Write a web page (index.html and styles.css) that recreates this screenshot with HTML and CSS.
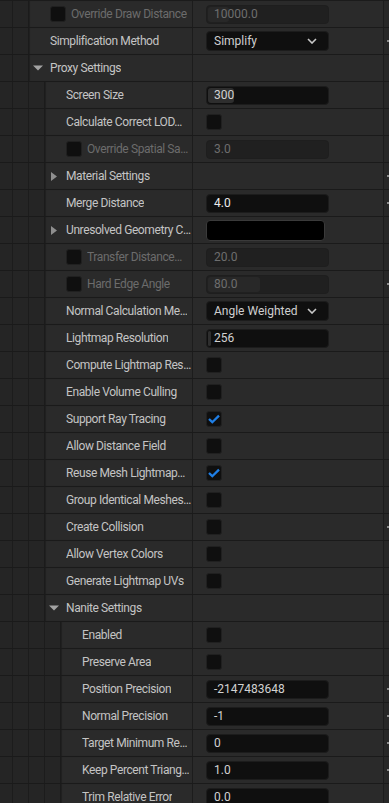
FILE: index.html
```html
<!DOCTYPE html>
<html lang="en">
<head>
    <meta charset="UTF-8">
    <meta name="viewport" content="width=device-width, initial-scale=1.0">
    <title>Proxy Settings</title>
    <link rel="stylesheet" href="styles.css">
</head>
<body>
    <div class="panel">
        <div class="row">
            <span class="ind"></span><span class="ind"></span>
            <div class="name"><span class="check"></span><span class="label dim">Override Draw Distance</span></div>
            <div class="value"><div class="field dim"><span class="fill" style="width:21px"></span><span class="txt">10000.0</span></div></div>
            <div class="tail"></div>
        </div>
        <div class="row">
            <span class="ind"></span><span class="ind"></span>
            <div class="name"><span class="label">Simplification Method</span></div>
            <div class="value"><div class="combo"><span>Simplify</span><svg width="10" height="6" viewBox="0 0 10 6"><polyline points="1,1 5,5 9,1" fill="none" stroke="#c8c8c8" stroke-width="1.6"/></svg></div></div>
            <div class="tail"><span class="mark"></span></div>
        </div>
        <div class="row">
            <span class="ind"></span><span class="ind"></span>
            <div class="name cat"><span class="arrow"><svg width="10" height="6" viewBox="0 0 10 6"><polygon points="0,0.5 10,0.5 5,5.5" fill="#a3a3a3"/></svg></span><span class="label">Proxy Settings</span></div>
            <div class="value"></div>
            <div class="tail"></div>
        </div>
        <div class="row">
            <span class="ind"></span><span class="ind"></span><span class="ind"></span>
            <div class="name"><span class="label">Screen Size</span></div>
            <div class="value"><div class="field"><span class="fill" style="width:26px"></span><span class="txt">300</span></div></div>
            <div class="tail"></div>
        </div>
        <div class="row">
            <span class="ind"></span><span class="ind"></span><span class="ind"></span>
            <div class="name"><span class="label">Calculate Correct LOD…</span></div>
            <div class="value"><span class="check"></span></div>
            <div class="tail"></div>
        </div>
        <div class="row">
            <span class="ind"></span><span class="ind"></span><span class="ind"></span>
            <div class="name"><span class="check"></span><span class="label dim">Override Spatial Sa…</span></div>
            <div class="value"><div class="field dim"><span class="txt">3.0</span></div></div>
            <div class="tail"></div>
        </div>
        <div class="row">
            <span class="ind"></span><span class="ind"></span><span class="ind"></span>
            <div class="name cat"><span class="arrow"><svg width="6" height="9" viewBox="0 0 6 9"><polygon points="0,0 6,4.5 0,9" fill="#8e8e8e"/></svg></span><span class="label">Material Settings</span></div>
            <div class="value"></div>
            <div class="tail"><span class="mark"></span></div>
        </div>
        <div class="row">
            <span class="ind"></span><span class="ind"></span><span class="ind"></span>
            <div class="name"><span class="label">Merge Distance</span></div>
            <div class="value"><div class="field bright"><span class="txt">4.0</span></div></div>
            <div class="tail"><span class="mark"></span></div>
        </div>
        <div class="row">
            <span class="ind"></span><span class="ind"></span><span class="ind"></span>
            <div class="name cat"><span class="arrow"><svg width="6" height="9" viewBox="0 0 6 9"><polygon points="0,0 6,4.5 0,9" fill="#8e8e8e"/></svg></span><span class="label">Unresolved Geometry C…</span></div>
            <div class="value"><div class="swatch"></div></div>
            <div class="tail"></div>
        </div>
        <div class="row">
            <span class="ind"></span><span class="ind"></span><span class="ind"></span>
            <div class="name"><span class="check"></span><span class="label dim">Transfer Distance…</span></div>
            <div class="value"><div class="field dim"><span class="txt">20.0</span></div></div>
            <div class="tail"></div>
        </div>
        <div class="row">
            <span class="ind"></span><span class="ind"></span><span class="ind"></span>
            <div class="name"><span class="check"></span><span class="label dim">Hard Edge Angle</span></div>
            <div class="value"><div class="field dim"><span class="fill" style="width:52px"></span><span class="txt">80.0</span></div></div>
            <div class="tail"><span class="mark"></span></div>
        </div>
        <div class="row">
            <span class="ind"></span><span class="ind"></span><span class="ind"></span>
            <div class="name"><span class="label">Normal Calculation Me…</span></div>
            <div class="value"><div class="combo"><span>Angle Weighted</span><svg width="10" height="6" viewBox="0 0 10 6"><polyline points="1,1 5,5 9,1" fill="none" stroke="#c8c8c8" stroke-width="1.6"/></svg></div></div>
            <div class="tail"></div>
        </div>
        <div class="row">
            <span class="ind"></span><span class="ind"></span><span class="ind"></span>
            <div class="name"><span class="label">Lightmap Resolution</span></div>
            <div class="value"><div class="field"><span class="fill" style="width:3px"></span><span class="txt">256</span></div></div>
            <div class="tail"></div>
        </div>
        <div class="row">
            <span class="ind"></span><span class="ind"></span><span class="ind"></span>
            <div class="name"><span class="label">Compute Lightmap Res…</span></div>
            <div class="value"><span class="check"></span></div>
            <div class="tail"></div>
        </div>
        <div class="row">
            <span class="ind"></span><span class="ind"></span><span class="ind"></span>
            <div class="name"><span class="label">Enable Volume Culling</span></div>
            <div class="value"><span class="check"></span></div>
            <div class="tail"></div>
        </div>
        <div class="row">
            <span class="ind"></span><span class="ind"></span><span class="ind"></span>
            <div class="name"><span class="label">Support Ray Tracing</span></div>
            <div class="value"><span class="check"><svg width="16" height="16" viewBox="0 0 16 16"><polyline points="3,8 6.3,11.2 13,4.6" fill="none" stroke="#1f7fe6" stroke-width="2.3"/></svg></span></div>
            <div class="tail"></div>
        </div>
        <div class="row">
            <span class="ind"></span><span class="ind"></span><span class="ind"></span>
            <div class="name"><span class="label">Allow Distance Field</span></div>
            <div class="value"><span class="check"></span></div>
            <div class="tail"></div>
        </div>
        <div class="row">
            <span class="ind"></span><span class="ind"></span><span class="ind"></span>
            <div class="name"><span class="label">Reuse Mesh Lightmap…</span></div>
            <div class="value"><span class="check"><svg width="16" height="16" viewBox="0 0 16 16"><polyline points="3,8 6.3,11.2 13,4.6" fill="none" stroke="#1f7fe6" stroke-width="2.3"/></svg></span></div>
            <div class="tail"></div>
        </div>
        <div class="row">
            <span class="ind"></span><span class="ind"></span><span class="ind"></span>
            <div class="name"><span class="label">Group Identical Meshes…</span></div>
            <div class="value"><span class="check"></span></div>
            <div class="tail"></div>
        </div>
        <div class="row">
            <span class="ind"></span><span class="ind"></span><span class="ind"></span>
            <div class="name"><span class="label">Create Collision</span></div>
            <div class="value"><span class="check"></span></div>
            <div class="tail"><span class="mark"></span></div>
        </div>
        <div class="row">
            <span class="ind"></span><span class="ind"></span><span class="ind"></span>
            <div class="name"><span class="label">Allow Vertex Colors</span></div>
            <div class="value"><span class="check"></span></div>
            <div class="tail"></div>
        </div>
        <div class="row">
            <span class="ind"></span><span class="ind"></span><span class="ind"></span>
            <div class="name"><span class="label">Generate Lightmap UVs</span></div>
            <div class="value"><span class="check"></span></div>
            <div class="tail"></div>
        </div>
        <div class="row">
            <span class="ind"></span><span class="ind"></span><span class="ind"></span>
            <div class="name cat"><span class="arrow"><svg width="10" height="6" viewBox="0 0 10 6"><polygon points="0,0.5 10,0.5 5,5.5" fill="#a3a3a3"/></svg></span><span class="label">Nanite Settings</span></div>
            <div class="value"></div>
            <div class="tail"></div>
        </div>
        <div class="row">
            <span class="ind"></span><span class="ind"></span><span class="ind"></span><span class="ind"></span>
            <div class="name"><span class="label">Enabled</span></div>
            <div class="value"><span class="check"></span></div>
            <div class="tail"></div>
        </div>
        <div class="row">
            <span class="ind"></span><span class="ind"></span><span class="ind"></span><span class="ind"></span>
            <div class="name"><span class="label">Preserve Area</span></div>
            <div class="value"><span class="check"></span></div>
            <div class="tail"></div>
        </div>
        <div class="row">
            <span class="ind"></span><span class="ind"></span><span class="ind"></span><span class="ind"></span>
            <div class="name"><span class="label">Position Precision</span></div>
            <div class="value"><div class="field"><span class="txt">-2147483648</span></div></div>
            <div class="tail"><span class="mark"></span></div>
        </div>
        <div class="row">
            <span class="ind"></span><span class="ind"></span><span class="ind"></span><span class="ind"></span>
            <div class="name"><span class="label">Normal Precision</span></div>
            <div class="value"><div class="field"><span class="txt">-1</span></div></div>
            <div class="tail"><span class="mark"></span></div>
        </div>
        <div class="row">
            <span class="ind"></span><span class="ind"></span><span class="ind"></span><span class="ind"></span>
            <div class="name"><span class="label">Target Minimum Re…</span></div>
            <div class="value"><div class="field"><span class="txt">0</span></div></div>
            <div class="tail"><span class="mark"></span></div>
        </div>
        <div class="row">
            <span class="ind"></span><span class="ind"></span><span class="ind"></span><span class="ind"></span>
            <div class="name"><span class="label">Keep Percent Triang…</span></div>
            <div class="value"><div class="field"><span class="txt">1.0</span></div></div>
            <div class="tail"><span class="mark"></span></div>
        </div>
        <div class="row">
            <span class="ind"></span><span class="ind"></span><span class="ind"></span><span class="ind"></span>
            <div class="name"><span class="label">Trim Relative Error</span></div>
            <div class="value"><div class="field"><span class="txt">0.0</span></div></div>
            <div class="tail"></div>
        </div>
    </div>
</body>
</html>
```

FILE: styles.css
```css
body {
    margin: 0;
    background-color: #1f1f1f;
    font-family: Roboto, "Noto Sans", sans-serif;
    font-size: 12px;
    letter-spacing: -0.4px;
    color: #c4c4c4;
    overflow: hidden;
}
.panel {
    margin-left: -4px;
    border-top: 1px solid #1b1b1b;
}
.row {
    display: flex;
    height: 26px;
    border-bottom: 1px solid #1a1a1a;
}
.ind {
    flex: none;
    width: 15px;
    border-left: 1px solid #1c1c1c;
    background-color: #252525;
}
.name {
    flex: 1;
    min-width: 0;
    display: flex;
    align-items: center;
    padding-left: 21px;
    border-left: 1px solid #1b1b1b;
    background-color: #2a2a2a;
    box-shadow: inset 1px 0 1px rgba(0, 0, 0, 0.25);
    white-space: nowrap;
    overflow: hidden;
}
.name.cat {
    padding-left: 1px;
}
.arrow {
    flex: none;
    width: 16px;
    display: flex;
    justify-content: center;
    align-items: center;
    margin-right: 4px;
}
.label {
    overflow: hidden;
    text-overflow: ellipsis;
}
.label.dim {
    color: #6c6c6c;
}
.name .check {
    margin-right: 5px;
}
.value {
    flex: none;
    width: 177px;
    padding-left: 13px;
    display: flex;
    align-items: center;
    border-left: 1px solid #1c1c1c;
    background-color: #2a2a2a;
    letter-spacing: 0;
}
.tail {
    flex: none;
    width: 5px;
    border-left: 1px solid #1c1c1c;
    background-color: #272727;
    position: relative;
}
.mark {
    position: absolute;
    left: 3px;
    top: 12px;
    width: 2px;
    height: 2px;
    background-color: #8a8a8a;
}
.check {
    flex: none;
    width: 16px;
    height: 16px;
    box-sizing: border-box;
    background-color: #0f0f0f;
    border: 1px solid #202020;
    border-radius: 3px;
    display: flex;
    align-items: center;
    justify-content: center;
}
.check svg {
    margin: -1px;
}
.field {
    position: relative;
    width: 123px;
    height: 19px;
    box-sizing: border-box;
    padding-left: 7px;
    display: flex;
    align-items: center;
    background-color: #0f0f0f;
    border: 1px solid #1c1c1c;
    border-radius: 4px;
    color: #d2d2d2;
    overflow: hidden;
}
.field.bright {
    color: #ececec;
}
.field.dim {
    background-color: #202020;
    border-color: #1e1e1e;
    color: #6e6e6e;
}
.fill {
    position: absolute;
    left: 1px;
    top: 1px;
    bottom: 1px;
    border-radius: 3px;
    background-color: #2e2e2e;
}
.field.dim .fill {
    background-color: #282828;
}
.txt {
    position: relative;
}
.combo {
    width: 123px;
    height: 20px;
    box-sizing: border-box;
    padding: 0 11px 0 7px;
    display: flex;
    align-items: center;
    justify-content: space-between;
    background-color: #0f0f0f;
    border: 1px solid #1c1c1c;
    border-radius: 4px;
    color: #cfcfcf;
}
.swatch {
    width: 119px;
    height: 21px;
    box-sizing: border-box;
    background-color: #000;
    border: 1px solid #3a3a3a;
    border-radius: 4px;
}
```
